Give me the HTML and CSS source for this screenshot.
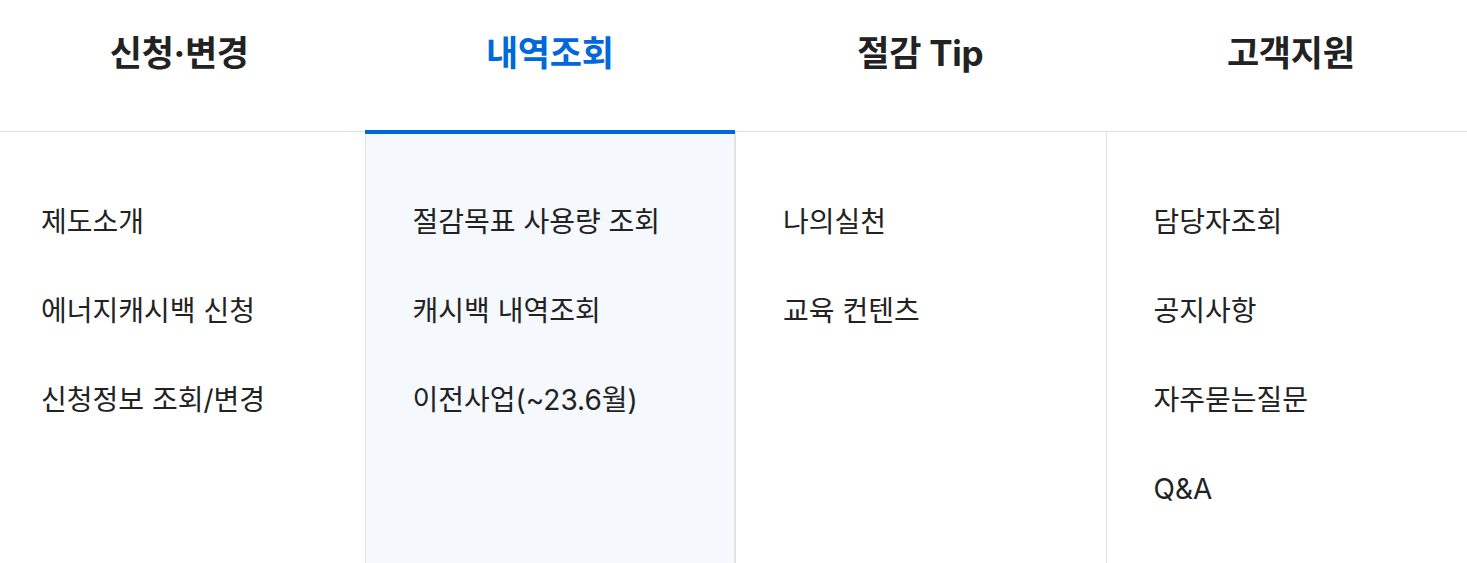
FILE: index.html
```html
<!DOCTYPE html>
<html lang="ko">
<head>
<meta charset="utf-8">
<link rel="stylesheet" href="styles.css">
</head>
<body>
<nav class="gnb">
  <div class="col">
    <div class="tab">신청·변경</div>
    <ul class="menu">
      <li>제도소개</li>
      <li>에너지캐시백 신청</li>
      <li>신청정보 조회/변경</li>
    </ul>
  </div>
  <div class="col active">
    <div class="tab">내역조회</div>
    <ul class="menu">
      <li>절감목표 사용량 조회</li>
      <li>캐시백 내역조회</li>
      <li>이전사업(~23.6월)</li>
    </ul>
  </div>
  <div class="col">
    <div class="tab">절감 Tip</div>
    <ul class="menu">
      <li>나의실천</li>
      <li>교육 컨텐츠</li>
    </ul>
  </div>
  <div class="col">
    <div class="tab">고객지원</div>
    <ul class="menu">
      <li>담당자조회</li>
      <li>공지사항</li>
      <li>자주묻는질문</li>
      <li>Q&amp;A</li>
    </ul>
  </div>
</nav>
</body>
</html>
```
FILE: styles.css
```css
html, body {
  margin: 0;
  padding: 0;
  background: #fff;
  overflow: hidden;
  height: 563px;
}
body {
  font-family: Inter, "Noto Sans CJK KR", "Noto Sans", sans-serif;
  color: #222;
}
.gnb {
  display: grid;
  grid-template-columns: repeat(4, 1fr);
  width: 1482px;
  margin-left: -6px;
  height: 563px;
}
.col {
  display: flex;
  flex-direction: column;
}
.col + .col .menu {
  border-left: 1px solid #e3e3e3;
}
.tab {
  height: 132px;
  box-sizing: border-box;
  padding-top: 29px;
  line-height: 48px;
  font-size: 35px;
  font-weight: 700;
  text-align: center;
  color: #222;
  border-bottom: 1px solid #e1e1e1;
  letter-spacing: -0.3px;
}
.col.active .tab {
  position: relative;
  color: #0068d9;
  border-bottom: 4px solid #0068d9;
  height: 134px;
  margin-bottom: -2px;
}
.menu {
  flex: 1;
  list-style: none;
  margin: 0;
  padding: 72px 0 0 47px;
  display: flex;
  flex-direction: column;
  gap: 53px;
}
.col.active .menu {
  background: #f5f8fc;
  border-right: 1px solid #e3e3e3;
}
.menu li {
  font-size: 28px;
  line-height: 36px;
  color: #222;
}
```
